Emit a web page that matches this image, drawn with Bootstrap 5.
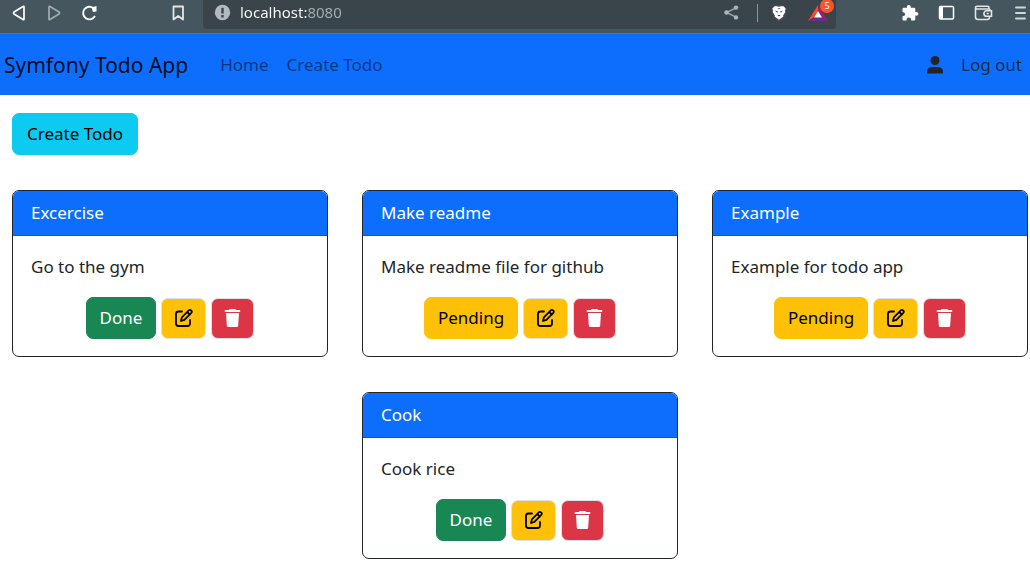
<!DOCTYPE html>
<html lang="en">
<head>
<meta charset="utf-8">
<meta name="viewport" content="width=device-width, initial-scale=1">
<title>Symfony Todo App</title>
<link rel="stylesheet" href="https://cdn.jsdelivr.net/npm/bootstrap@5.3.0/dist/css/bootstrap.min.css">
<style>
  body { font-family: "Noto Sans", "Open Sans", sans-serif; font-size: 17px; line-height: 27px; }
  svg { display: block; flex: none; }

  .browser-bar { background: #45565e; height: 34px; border-bottom: 1px solid #5f747c; padding: 0 2px 0 11px; }
  .browser-bar button { background: none; border: 0; padding: 0; color: #fff; }
  .nav-tools { gap: 18px; height: 25px; }
  .bookmark { margin: 0 18px 0 73px; height: 25px; }
  .address { background: #3a454b; height: 29px; border-radius: 0 0 4px 4px; padding: 0 8px 4px 11px; gap: 9px; color: #b4b9bc; }
  .url-box { border: 0; padding: 0; outline: 0; min-width: 0; font-size: 15px; line-height: 25px; color: transparent;
    background: linear-gradient(to right, #fff 67px, #a7adb0 67px); -webkit-background-clip: text; background-clip: text; }
  .address-tools { gap: 13px; }
  .divider { width: 1px; height: 18px; background: #8c9498; }
  .rewards-count { position: absolute; top: -5px; right: -6px; width: 14px; height: 14px; border-radius: 50%; background: #fb542b; color: #fff; font-size: 9px; line-height: 14px; text-align: center; }
  .window-tools { gap: 19px; margin-left: 65px; height: 25px; }

  .app-nav { min-height: 61px; padding: 0 8px 0 4px; }
  .app-nav .navbar-brand { font-size: 21px; line-height: 32px; margin-right: 32px; padding: 0; color: rgba(0,0,0,.9); }
  .app-nav .main-links { gap: 18px; }
  .app-nav .main-links .nav-link { padding: 0; color: rgba(0,0,0,.5); }
  .app-nav .account { gap: 17px; color: #212529; }
  .app-nav .logout { color: #212529; text-decoration: none; opacity: .9; }

  .page-main { padding: 18px 2px 16px 12px; }
  .btn { --bs-btn-font-size: 17px; --bs-btn-padding-x: 14px; --bs-btn-padding-y: 0; --bs-btn-border-radius: 7px; height: 42px; line-height: 40px; }
  .todo-list { margin-top: 35px; gap: 35px 34px; }
  .todo { flex: 0 0 calc((100% - 68px) / 3); min-width: 240px; border: 1px solid #212529; --bs-card-border-radius: 7px; --bs-card-inner-border-radius: 6px; }
  .todo .card-header { padding: 8px 18px 9px; border-bottom-color: #0a58ca; }
  .todo .card-body { padding: 17px 18px; }
  .todo .card-text { margin-bottom: 17px; }
  .todo .actions { gap: 5px; }
  .todo .btn { padding: 0 13px; }
  .todo .btn-icon { height: 41px; border-color: #dee2e6; padding: 0 12px; }
</style>
</head>
<body>
<svg class="d-none" aria-hidden="true">
  <symbol id="i-edit" viewBox="0 0 19 20">
    <g fill="none" stroke="currentColor" stroke-width="1.800" stroke-linecap="round" stroke-linejoin="round">
      <path d="M8 3.500H4.500A2.500 2.500 0 0 0 2 6v9.500A2.500 2.500 0 0 0 4.500 18h9a2.500 2.500 0 0 0 2.500-2.500V12"/>
      <path d="M7 13l.9-3.700 6.900-6.900a1.600 1.600 0 0 1 2.200 0l.3.300a1.600 1.600 0 0 1 0 2.200l-6.900 6.900zM13.300 4l2.600 2.600"/>
    </g>
  </symbol>
  <symbol id="i-trash" viewBox="0 0 17 20">
    <path fill="currentColor" d="M.8 2h4.200l.7-1h5.600l.7 1h4.200v2H.8zM2 5h13l-.8 12.400a1.600 1.600 0 0 1-1.600 1.600H4.400a1.600 1.600 0 0 1-1.600-1.600z"/>
  </symbol>
</svg>

<header class="browser-bar d-flex align-items-start">
  <div class="nav-tools d-flex align-items-center">
    <button type="button" aria-label="Back"><svg width="17" height="18" viewBox="0 0 17 18" fill="none" stroke="currentColor" stroke-width="1.700" stroke-linejoin="round"><path d="M13 3v12q0 1-1 .4L3 10q-1-1 0-2l9-5.400q1-.6 1 .4z"/></svg></button>
    <button type="button" aria-label="Forward" class="opacity-50"><svg width="17" height="18" viewBox="0 0 17 18" fill="none" stroke="currentColor" stroke-width="1.700" stroke-linejoin="round"><path d="M3 3v12q0 1 1 .4l9-5.400q1-1 0-2L4 2.600Q3 2 3 3z"/></svg></button>
    <button type="button" aria-label="Reload"><svg width="17" height="18" viewBox="0 0 17 18"><path d="M14 12A6.300 6.300 0 1 1 12.500 4.200" fill="none" stroke="currentColor" stroke-width="1.900"/><path d="M10.500 3.500L15.500 2v5.500L12 8z" fill="currentColor"/></svg></button>
  </div>
  <button type="button" aria-label="Bookmark" class="bookmark"><svg width="14" height="18" viewBox="0 0 14 18" fill="none" stroke="#e3e6e7" stroke-width="1.800" stroke-linejoin="round"><path d="M2.500 2.500h9.500v13L7.200 12l-4.700 3.500z"/></svg></button>
  <div class="address d-flex align-items-center flex-grow-1">
    <svg width="17" height="17" viewBox="0 0 17 17"><circle cx="8.500" cy="8.500" r="7.700" fill="#b4b9bc"/><path d="M7.300 3.800h2.400v5.700H7.300zM7.300 11h2.400v2.400H7.300z" fill="#3a454b"/></svg>
    <input class="url-box flex-grow-1" type="text" aria-label="Address" value="localhost:8080">
    <div class="address-tools d-flex align-items-center">
      <button type="button" aria-label="Share" class="me-1"><svg width="17" height="17" viewBox="0 0 17 17"><path d="M13 3.800L3.500 8.500l9.500 4.700" fill="none" stroke="#9fa6a9" stroke-width="1.400"/><g fill="#aeb4b7"><circle cx="13" cy="3.600" r="2.200"/><circle cx="3.500" cy="8.500" r="2.300"/><circle cx="13" cy="13.400" r="2.200"/></g></svg></button>
      <span class="divider"></span>
      <button type="button" aria-label="Shields"><svg width="16" height="18" viewBox="0 0 16 18"><path d="M3 1.500L8 .5l5 1 2.500 3.500-1.500 7.500Q12 16 8 17.800 4 16 2 12.500L.5 5z" fill="#4b4a5e"/><path d="M3.500 2.300h2.200L8 2.800l2.300-.5h2.200l2.300 2.500-.8 1.700.3 1.600-2.200 3.400.2 1L8 15.800l-4.300-3.300.2-1-2.200-3.400.3-1.600-.8-1.700z" fill="#fff"/><path d="M4 6.500l3 .9-.8 1.400zM12 6.500l-3 .9.8 1.400zM6.300 11h3.400L8 12.500zM6.300 4.300h3.400L8 5.300z" fill="#3f404c"/></svg></button>
      <button type="button" aria-label="Rewards" class="position-relative ms-2"><svg width="20" height="18" viewBox="0 0 20 18"><path d="M10 1L0 17l6-3 4-7z" fill="#ff4724"/><path d="M10 1l10 16-6-3-4-7z" fill="#9e1f63"/><path d="M0 17l6-4h8l6 4z" fill="#662d91"/><path d="M10 7l4 6.500H6z" fill="#fff"/></svg><span class="rewards-count">5</span></button>
    </div>
  </div>
  <div class="window-tools d-flex align-items-center">
    <button type="button" aria-label="Extensions"><svg width="18" height="18" viewBox="0 0 18 18"><path fill="#fff" d="M1.500 5q0-1.300 1.300-1.300H6Q5.600 1 7.800 1t1.900 2.700H13q1.300 0 1.300 1.300v3q3.200-.3 3.200 1.800t-3.200 1.800v3.600q0 1.300-1.300 1.300h-2.800q.2-3-2.300-3t-2.300 3H2.800q-1.300 0-1.300-1.300v-3q2.700 0 2.700-2T1.500 8z"/></svg></button>
    <button type="button" aria-label="Side panel"><svg width="17" height="16" viewBox="0 0 17 16"><rect x="1.500" y="1.500" width="14" height="12.500" rx="1" fill="none" stroke="#fff" stroke-width="1.500"/><path d="M1.500 1.500h3.500v12.500H1.500z" fill="#fff"/></svg></button>
    <button type="button" aria-label="Wallet"><svg width="19" height="16" viewBox="0 0 19 16" fill="none" stroke="#e1e5e6" stroke-width="1.600"><path d="M16 5.500V5q0-1-1-1H3Q1.500 4 1.500 2.800 1.500 1.300 3 1.300h10.500q1.500 0 1.500 1.500V4M1.500 3v9q0 2.500 2.500 2.500h9q2.500 0 2.500-2.500M17.500 5.700h-4.800a2.800 2.800 0 0 0 0 5.600h4.800z"/><path d="M12.700 8.500h2"/></svg></button>
    <button type="button" aria-label="Menu"><svg width="16" height="16" viewBox="0 0 16 16"><path d="M4 2.500h9M4 8h9M4 13.500h9" stroke="#d2d7d9" stroke-width="1.900" stroke-linecap="round"/></svg></button>
  </div>
</header>

<nav class="app-nav navbar navbar-expand bg-primary">
  <a class="navbar-brand" href="#">Symfony Todo App</a>
  <div class="navbar-nav main-links">
    <a class="nav-link" href="#">Home</a>
    <a class="nav-link" href="#">Create Todo</a>
  </div>
  <div class="account d-flex align-items-center ms-auto">
    <svg width="18" height="20" viewBox="0 0 18 20" fill="currentColor" aria-hidden="true"><circle cx="9" cy="5.500" r="4.500"/><path d="M1 18.500v-1.500q0-5 5-5h6q5 0 5 5v1.500z"/></svg>
    <a class="logout" href="#">Log out</a>
  </div>
</nav>

<main class="page-main container-fluid">
  <a class="btn btn-info" href="#">Create Todo</a>
  <div class="todo-list d-flex flex-wrap justify-content-center">
    <article class="card todo">
      <div class="card-header text-bg-primary">Excercise</div>
      <div class="card-body">
        <p class="card-text">Go to the gym</p>
        <div class="actions d-flex justify-content-center align-items-center">
          <button type="button" class="btn btn-success">Done</button>
          <button type="button" class="btn btn-warning btn-icon" aria-label="Edit"><svg width="19" height="20"><use href="#i-edit"/></svg></button>
          <button type="button" class="btn btn-danger btn-icon" aria-label="Delete"><svg width="17" height="20"><use href="#i-trash"/></svg></button>
        </div>
      </div>
    </article>
    <article class="card todo">
      <div class="card-header text-bg-primary">Make readme</div>
      <div class="card-body">
        <p class="card-text">Make readme file for github</p>
        <div class="actions d-flex justify-content-center align-items-center">
          <button type="button" class="btn btn-warning">Pending</button>
          <button type="button" class="btn btn-warning btn-icon" aria-label="Edit"><svg width="19" height="20"><use href="#i-edit"/></svg></button>
          <button type="button" class="btn btn-danger btn-icon" aria-label="Delete"><svg width="17" height="20"><use href="#i-trash"/></svg></button>
        </div>
      </div>
    </article>
    <article class="card todo">
      <div class="card-header text-bg-primary">Example</div>
      <div class="card-body">
        <p class="card-text">Example for todo app</p>
        <div class="actions d-flex justify-content-center align-items-center">
          <button type="button" class="btn btn-warning">Pending</button>
          <button type="button" class="btn btn-warning btn-icon" aria-label="Edit"><svg width="19" height="20"><use href="#i-edit"/></svg></button>
          <button type="button" class="btn btn-danger btn-icon" aria-label="Delete"><svg width="17" height="20"><use href="#i-trash"/></svg></button>
        </div>
      </div>
    </article>
    <article class="card todo">
      <div class="card-header text-bg-primary">Cook</div>
      <div class="card-body">
        <p class="card-text">Cook rice</p>
        <div class="actions d-flex justify-content-center align-items-center">
          <button type="button" class="btn btn-success">Done</button>
          <button type="button" class="btn btn-warning btn-icon" aria-label="Edit"><svg width="19" height="20"><use href="#i-edit"/></svg></button>
          <button type="button" class="btn btn-danger btn-icon" aria-label="Delete"><svg width="17" height="20"><use href="#i-trash"/></svg></button>
        </div>
      </div>
    </article>
  </div>
</main>
<script src="https://cdn.jsdelivr.net/npm/bootstrap@5.3.0/dist/js/bootstrap.bundle.min.js"></script>
</body>
</html>
